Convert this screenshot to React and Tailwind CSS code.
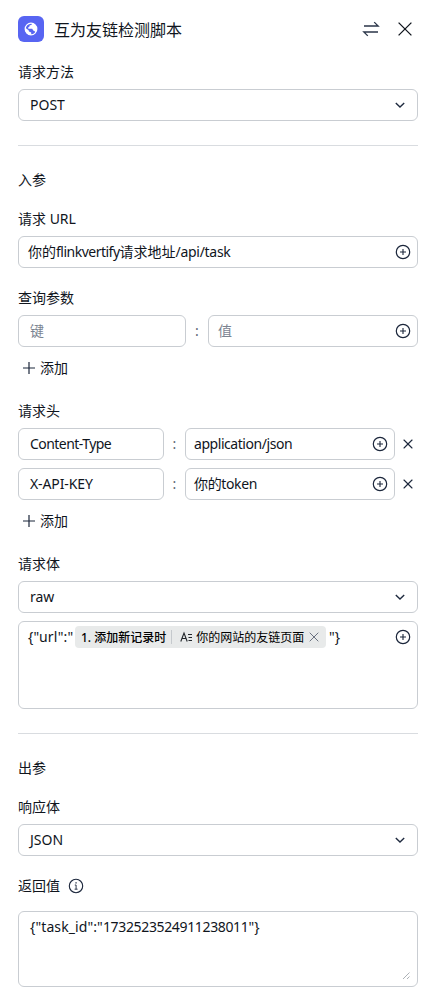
import { X } from 'lucide-react'

const GlobeIcon = () => (
  <svg width="14" height="14" viewBox="0 0 14 14" fill="none">
    <circle cx="7" cy="7" r="5.8" stroke="white" strokeWidth="1.2" />
    <path d="M1.3 5.8 4.6 8.2 5 9.6 7.2 10.6 7.2 12.9 5 12.7A6 6 0 0 1 1.3 5.8Z" fill="white" />
    <path d="M8.2 1.2 7.6 2.8 5.6 3.6 5.2 5 4 5.6 4.4 6.8 8.2 6.8 9.2 8.6 10.4 9 11.6 10.4 12.9 7.4 12.4 4.4 10.6 2Z" fill="white" />
  </svg>
)

const SwapIcon = () => (
  <svg width="18" height="18" viewBox="0 0 18 18" fill="none" stroke="#2a3548" strokeWidth="1.3">
    <path d="M2 6H16.2L12.2 2.1" />
    <path d="M16 12H1.8L5.8 15.9" />
  </svg>
)

const ChevronIcon = () => (
  <svg width="12" height="12" viewBox="0 0 12 12" fill="none" stroke="#1f2a3f" strokeWidth="1.4" className="shrink-0">
    <path d="M1.8 4 6 8 10.2 4" />
  </svg>
)

const PlusCircleIcon = () => (
  <svg width="16" height="16" viewBox="0 0 16 16" fill="none" stroke="#1b263b" strokeWidth="1.2" className="shrink-0">
    <circle cx="8" cy="8" r="6.7" />
    <path d="M5 8H11M8 5V11" strokeWidth="1.1" />
  </svg>
)

const InfoIcon = () => (
  <svg width="16" height="16" viewBox="0 0 16 16" fill="none" stroke="#1b263b" strokeWidth="1.1">
    <circle cx="8" cy="8" r="6.7" />
    <path d="M6.8 7H8.1V11.2M6.6 11.2H9.6" strokeWidth="0.9" />
    <path d="M7.4 4.8H8.7" strokeWidth="1.2" />
  </svg>
)

const TextFieldIcon = () => (
  <svg width="13" height="12" viewBox="0 0 13 12" fill="none" stroke="#22262b" strokeWidth="1.1">
    <path d="M0.8 10.5 4 2 7.2 10.5M2 7.5H6" />
    <path d="M8 3.5H12M8.5 6.5H12M8.5 9.5H12" />
  </svg>
)

const Label = ({ children }) => <div className="h-[22px] text-sm leading-[22px]">{children}</div>

const Select = ({ value }) => (
  <div className="mt-1.5 flex h-8 items-center justify-between rounded-md border border-[#c9cdd2] pr-[11px] pl-[11px]">
    <span>{value}</span>
    <ChevronIcon />
  </div>
)

const KeyInput = ({ className, children }) => (
  <div className={`flex h-8 items-center rounded-md border border-[#c9cdd2] pl-[11px] ${className}`}>{children}</div>
)

const ValueInput = ({ className, children }) => (
  <div className={`flex h-8 items-center justify-between rounded-md border border-[#c9cdd2] pr-1.5 ${className}`}>
    <span>{children}</span>
    <PlusCircleIcon />
  </div>
)

const AddButton = () => (
  <button type="button" className="mt-2.5 flex h-[22px] items-center gap-[5px] pl-[5px]">
    <svg width="12" height="12" viewBox="0 0 12 12" stroke="#1b263b" strokeWidth="1.2">
      <path d="M0 6H12M6 0V12" />
    </svg>
    <span>添加</span>
  </button>
)

const headers = [
  { name: 'Content-Type', value: 'application/json', nameSpacing: 'tracking-[-0.55px]', spacing: 'tracking-[-0.45px]' },
  { name: 'X-API-KEY', value: '你的token', nameSpacing: 'tracking-[-0.1px]', spacing: 'tracking-[-0.35px]' },
]

const App = () => {
  return (
    <div className="h-[998px] w-[436px] bg-white px-[18px] pt-4 font-['Noto_Sans','Noto_Sans_CJK_SC',sans-serif] text-sm leading-[22px] text-[#10151d]">
      <header className="flex h-[26px] items-center">
        <div className="flex size-[26px] items-center justify-center rounded-md bg-[#5865f2]">
          <GlobeIcon />
        </div>
        <h1 className="ml-2.5 pt-0.5 text-base leading-6">互为友链检测脚本</h1>
        <div className="ml-auto flex items-center gap-4 pr-1">
          <SwapIcon />
          <svg width="18" height="18" viewBox="0 0 18 18" stroke="#10151d" strokeWidth="1.3">
            <path d="M2.6 2.6 15.4 15.4M15.4 2.6 2.6 15.4" />
          </svg>
        </div>
      </header>

      <section className="mt-[19px]">
        <Label>请求方法</Label>
        <Select value="POST" />
      </section>

      <hr className="mt-6 border-[#d9dce0]" />

      <h2 className="mt-[23px]">入参</h2>

      <section className="mt-[17px]">
        <Label>请求 URL</Label>
        <ValueInput className="mt-1.5 pl-[9px]">
          你的<span className="tracking-[-0.5px]">flinkvertify</span>请求地址<span className="tracking-[-0.3px]">/api/task</span>
        </ValueInput>
      </section>

      <section className="mt-[19px]">
        <Label>查询参数</Label>
        <div className="mt-1.5 flex items-center">
          <KeyInput className="w-[168px] text-[#7b8491]">键</KeyInput>
          <span className="w-[22px] text-center text-[#5c6675]">:</span>
          <ValueInput className="flex-1 pl-[9px] text-[#7b8491]">值</ValueInput>
        </div>
        <AddButton />
      </section>

      <section className="mt-[21px]">
        <Label>请求头</Label>
        <div className="mt-1.5 flex flex-col gap-2">
          {headers.map((h) => (
            <div key={h.name} className="flex items-center">
              <KeyInput className={`w-[146px] ${h.nameSpacing}`}>{h.name}</KeyInput>
              <span className="w-[21px] text-center text-[#5c6675]">:</span>
              <ValueInput className={`w-[210px] pl-2 ${h.spacing}`}>{h.value}</ValueInput>
              <X size={16} strokeWidth={1.6} color="#1b263b" className="ml-[5px]" />
            </div>
          ))}
        </div>
        <AddButton />
      </section>

      <section className="mt-[21px]">
        <Label>请求体</Label>
        <Select value="raw" />
        <div className="mt-2 flex h-[88px] items-start justify-between rounded-md border border-[#c9cdd2] pt-1 pr-1.5 pl-[9px]">
          <div className="flex items-center">
            <span className="w-[47px] tracking-[0.2px]">{'{"url":"'}</span>
            <span className="flex h-[22px] w-[251px] items-center rounded bg-[#e8eaea] pl-1.5 text-xs text-black">
              <span className="pt-px font-medium">1. 添加新记录时</span>
              <span className="mr-2 ml-[5px] h-3.5 w-px bg-[#c5c9cd]" />
              <TextFieldIcon />
              <span className="ml-[3px] pt-px">你的网站的友链页面</span>
              <svg width="10" height="10" viewBox="0 0 10 10" stroke="#6b7280" strokeWidth="1" className="ml-[5px]">
                <path d="M0.7 0.7 9.3 9.3M9.3 0.7 0.7 9.3" />
              </svg>
            </span>
            <span className="ml-[3px]">{'"}'}</span>
          </div>
          <span className="pt-[3px]">
            <PlusCircleIcon />
          </span>
        </div>
      </section>

      <hr className="mt-6 border-[#d9dce0]" />

      <h2 className="mt-[23px]">出参</h2>

      <section className="mt-[17px]">
        <Label>响应体</Label>
        <Select value="JSON" />
      </section>

      <section className="mt-[19px]">
        <div className="flex items-center gap-2">
          <Label>返回值</Label>
          <InfoIcon />
        </div>
        <div className="mt-3.5 flex h-[76px] justify-between rounded-md border border-[#c9cdd2] pt-1 pr-[5px] pl-[11px]">
          <span>
            <span className="tracking-[0.1px]">{'{"task_id":"'}</span>
            <span className="tracking-[-0.35px]">1732523524911238011</span>
            {'"}'}
          </span>
          <svg width="9" height="9" viewBox="0 0 9 9" stroke="#a3a8ae" strokeWidth="0.9" className="mr-px mb-1.5 self-end">
            <path d="M1 8 7.5 1.5M5 8 7.5 5.5" />
          </svg>
        </div>
      </section>
    </div>
  )
}

export default App
